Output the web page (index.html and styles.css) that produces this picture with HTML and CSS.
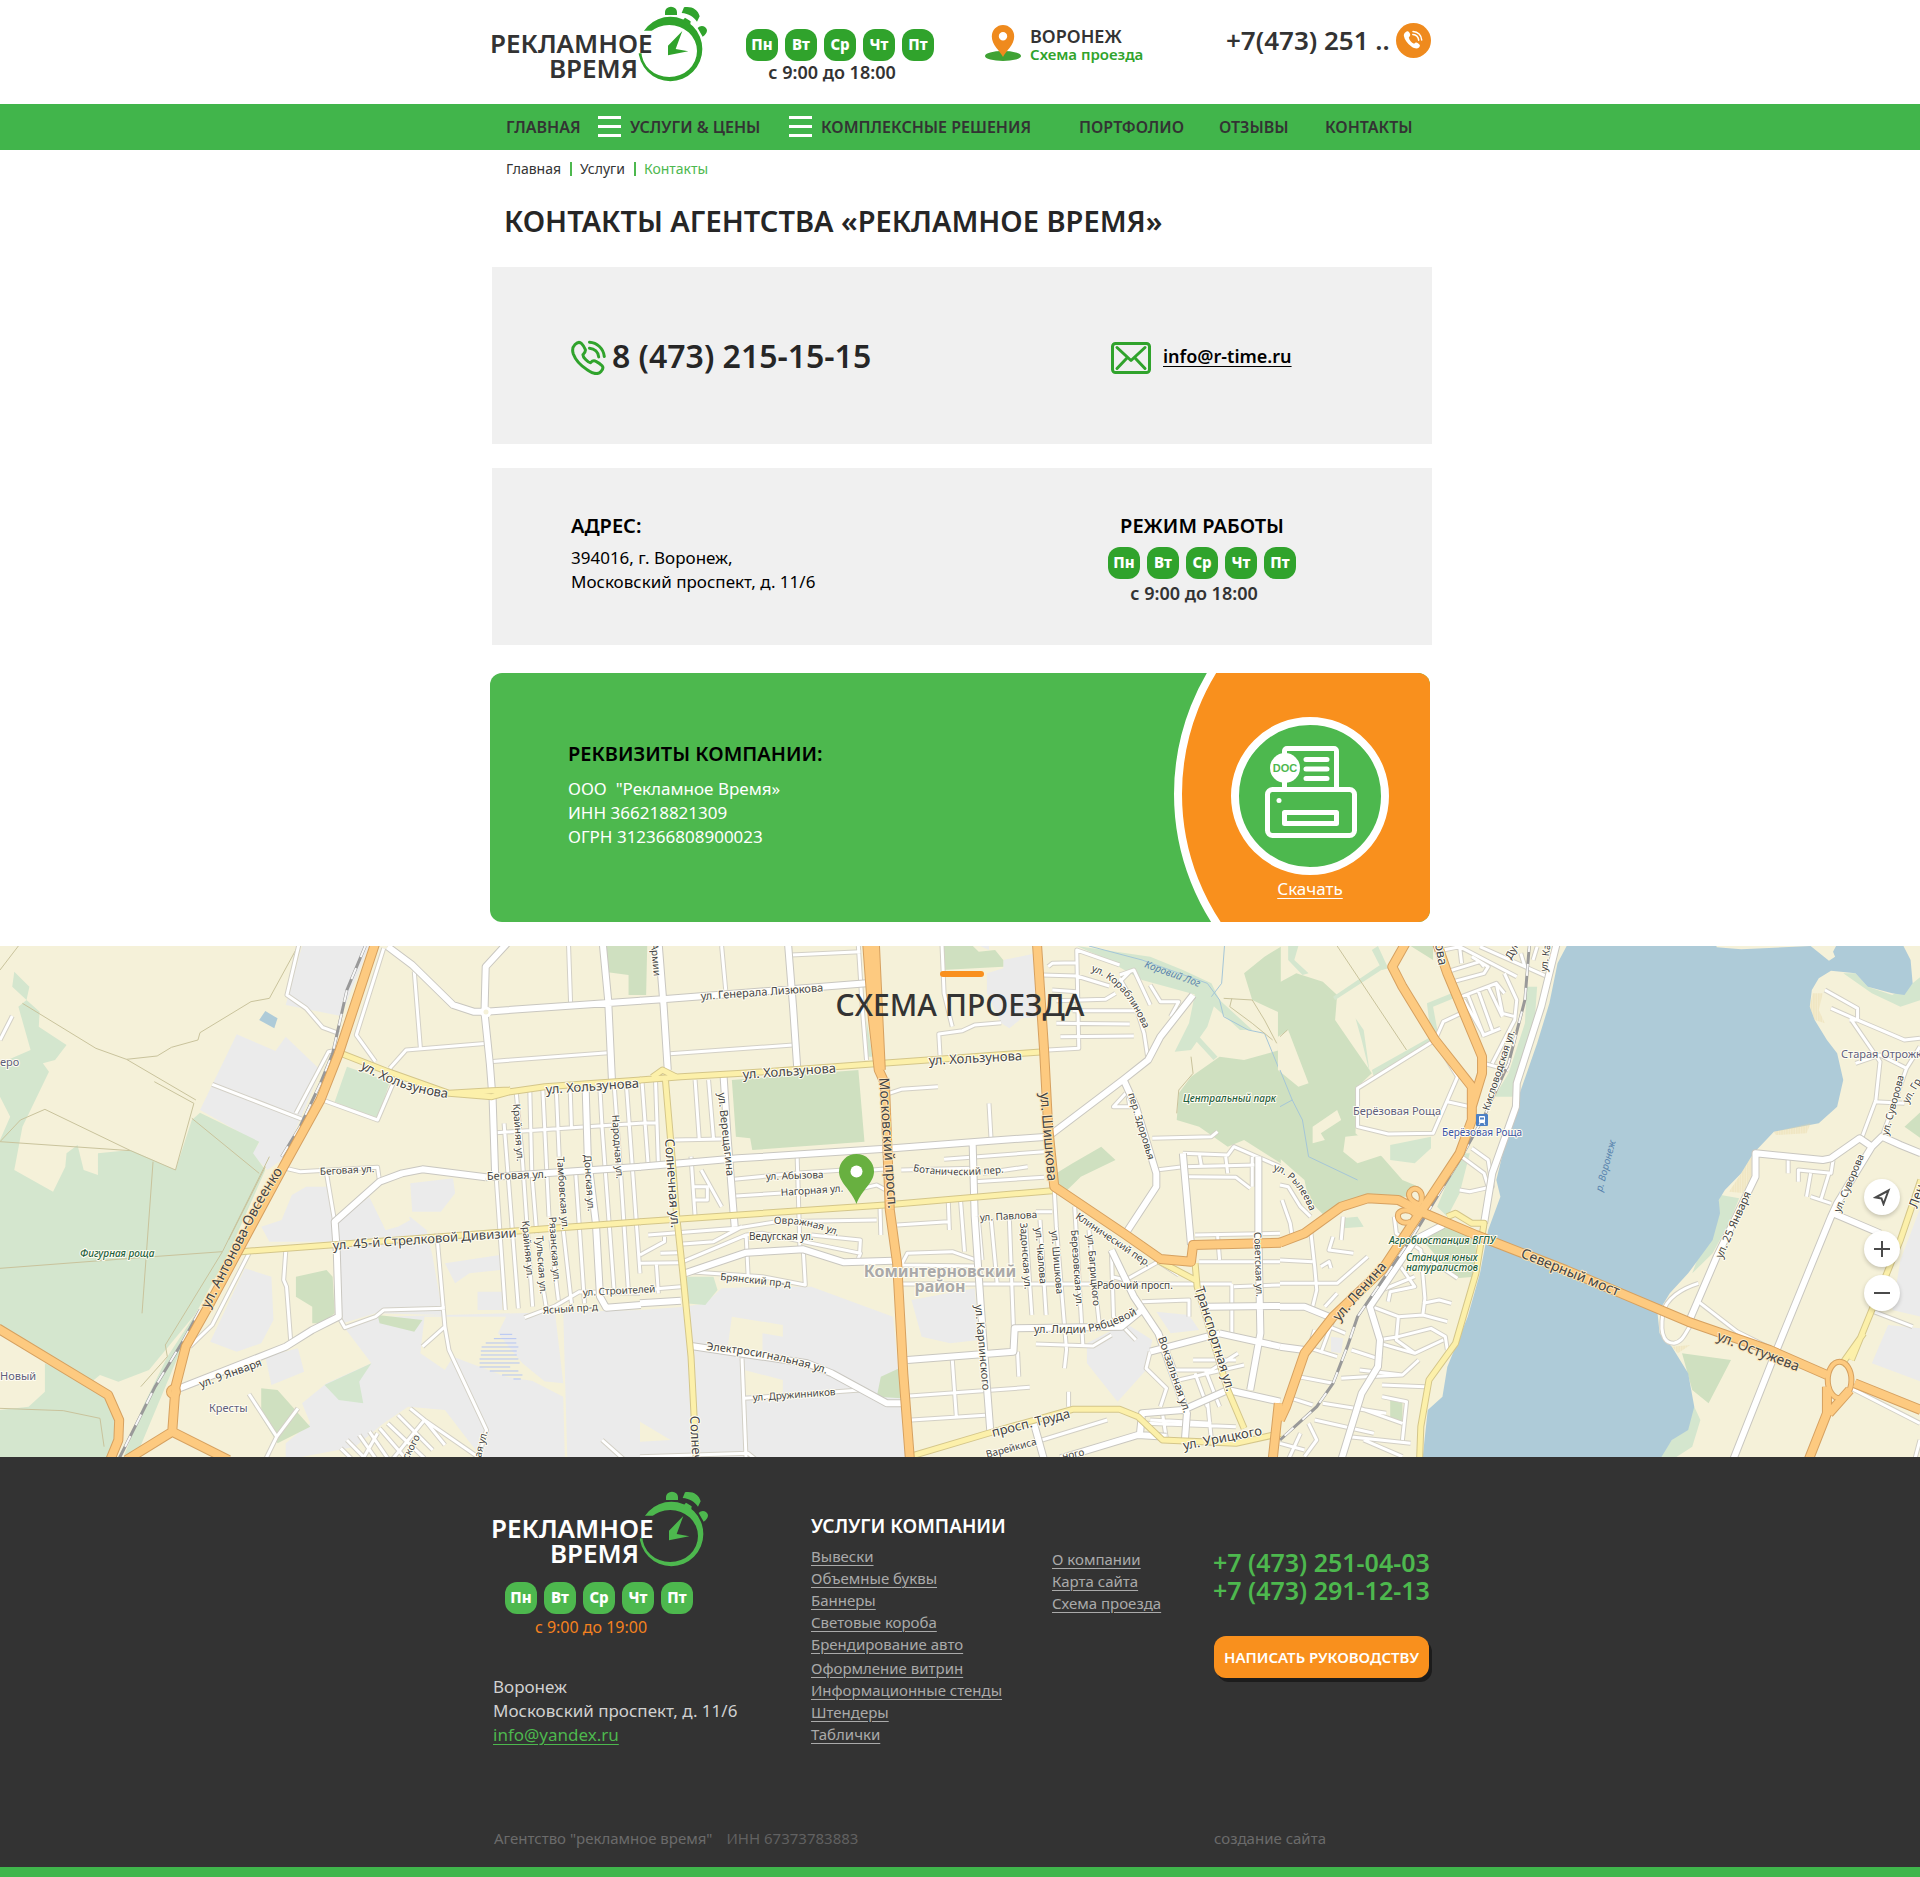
FILE: index.html
```html
<!DOCTYPE html>
<html lang="ru">
<head>
<meta charset="utf-8">
<meta name="viewport" content="width=device-width, initial-scale=1">
<title>Контакты агентства «Рекламное Время»</title>
<link rel="stylesheet" href="styles.css">
</head>
<body>
<svg class="sprite" aria-hidden="true">
  <defs>
    <clipPath id="clock-cut"><path d="M470 40H690V250H470V160H560V92H470z"/></clipPath>
    <g id="clock">
      <path fill-rule="evenodd" clip-path="url(#clock-cut)" d="M475 147a96 96.500 0 1 0 192 0a96 96.500 0 1 0-192 0zM484 153a83.500 78 0 1 0 167 0a83.500 78 0 1 0-167 0z"/>
      <path d="M555 45V36a18 16 0 0 1 36 0v9zM605 39l7-17c22-4 42 6 47 27l-8 16c-9-14-25-24-46-26zM607 62l8-9 17 11-2 16zM653 84c8-10 24-8 28 6 0 8-4 14-13 20zM607 93l-20 54 38 7-61 12v-29z"/>
    </g>
  </defs>
</svg>

<header class="header">
  <div class="wrap header__grid">
    <a class="logo" href="#" aria-label="Рекламное время">
      <svg width="218" height="78" viewBox="0 0 218 78">
        <use class="logo__clock" href="#clock" transform="translate(-11 -5) scale(.33333)"/>
        <text class="logo__text" x="-1" y="48">РЕКЛАМНОЕ</text>
        <text class="logo__text" x="147" y="73" text-anchor="end">ВРЕМЯ</text>
      </svg>
    </a>
    <div class="hours hours--header">
      <div class="days"><span>Пн</span><span>Вт</span><span>Ср</span><span>Чт</span><span>Пт</span></div>
      <p class="hours__time">с 9:00 до 18:00</p>
    </div>
    <div class="city">
      <svg width="36" height="36" viewBox="0 0 36 36"><ellipse cx="18" cy="31" rx="18" ry="5" fill="#3fa234"/><path fill="#ef8a1d" fill-rule="evenodd" d="M18 32C15 26 6.800 20 6.800 11.500a11.200 11.500 0 0 1 22.400 0C29.200 20 21 26 18 32zM18 7a4.200 4.200 0 1 0 0 8.400A4.200 4.200 0 0 0 18 7z"/></svg>
      <div class="city__text"><b>ВОРОНЕЖ</b><a href="#map">Схема проезда</a></div>
    </div>
    <div class="call">
      <span>+7(473) 251 ..</span>
      <button class="call__button" type="button" aria-label="Позвонить">
        <svg width="35" height="35" viewBox="0 0 35 35"><circle cx="17.500" cy="17.500" r="17.500" fill="#ef8a1d"/><path fill="#fff" d="M9.500 9.200c1.700-1.600 3-1.200 4.100.9 1 1.900.9 2.800-.8 4.400.6 2.900 2.600 5.200 5.300 6.200 1.500-1.500 2.500-1.500 4.200-.2 2 1.500 2.200 2.400.7 3.900-1.600 1.600-4.200 1.500-7.600-.9-4.500-3.200-6.800-6.800-7.500-10.400-.3-1.600.3-2.800 1.600-3.900z"/><path fill="none" stroke="#fff" stroke-width="1.500" stroke-linecap="round" d="M17 8.500c5 .2 8.500 3.800 8.700 8.500M16.800 11.500c3.400.3 5.500 2.500 5.900 5.700"/></svg>
      </button>
    </div>
  </div>
</header>

<nav class="nav" aria-label="Основное меню">
  <ul class="wrap nav__list">
    <li><a href="#">ГЛАВНАЯ</a></li>
    <li><a href="#"><i class="burger"></i>УСЛУГИ &amp; ЦЕНЫ</a></li>
    <li><a href="#"><i class="burger"></i>КОМПЛЕКСНЫЕ РЕШЕНИЯ</a></li>
    <li><a href="#">ПОРТФОЛИО</a></li>
    <li><a href="#">ОТЗЫВЫ</a></li>
    <li><a href="#">КОНТАКТЫ</a></li>
  </ul>
</nav>

<main>
  <div class="wrap">
    <ol class="crumbs">
      <li><a href="#">Главная</a></li>
      <li><a href="#">Услуги</a></li>
      <li class="crumbs__current" aria-current="page">Контакты</li>
    </ol>
    <h1 class="title">КОНТАКТЫ АГЕНТСТВА «РЕКЛАМНОЕ ВРЕМЯ»</h1>

    <section class="card card--contacts">
      <div class="contact">
        <svg class="outline" width="35" height="35" viewBox="0 0 35 35"><path d="M4 4.500C6 2.500 8.500 1.500 10.500 3.500c2 2 3 4 3.800 6 .7 2.200-.6 3.300-2.300 5-.5 2.500 5 8 7.500 8.200 1.700-1.800 3-2.600 5-1.600 2.600 1.200 4.700 2.700 6.600 4.600 1.700 1.900.7 3.800-1.100 5.800-3 3.300-8.500 2-13.500-1.500C9.500 25.500 4.500 20 2.300 14 1 10 1.500 7 4 4.500zM18.500 2.200C26 2.500 32.500 8.500 33.300 16.500M18.500 8.200c5 .4 8.800 3.800 9.200 8.800"/></svg>
        <span class="contact__phone">8 (473) 215-15-15</span>
      </div>
      <div class="contact contact--mail">
        <svg class="outline" width="40" height="32" viewBox="0 0 40 32"><rect x="1.500" y="1.500" width="37" height="29" rx="3"/><path d="M6 5.500l14 13 14-13M6 26.500l9.500-10M34 26.500l-9.500-10"/></svg>
        <a href="mailto:info@r-time.ru">info@r-time.ru</a>
      </div>
    </section>

    <section class="card card--address">
      <div>
        <h2>АДРЕС:</h2>
        <p>394016, г. Воронеж,<br>Московский проспект, д. 11/6</p>
      </div>
      <div class="hours hours--card">
        <h2>РЕЖИМ РАБОТЫ</h2>
        <div class="days"><span>Пн</span><span>Вт</span><span>Ср</span><span>Чт</span><span>Пт</span></div>
        <p class="hours__time">с 9:00 до 18:00</p>
      </div>
    </section>

    <section class="company">
      <div class="company__text">
        <h2>РЕКВИЗИТЫ КОМПАНИИ:</h2>
        <p>ООО&nbsp; "Рекламное Время»<br>ИНН 366218821309<br>ОГРН 312366808900023</p>
      </div>
      <div class="company__download">
        <svg class="company__arc" width="256" height="249" viewBox="0 0 256 249" aria-hidden="true"><circle cx="239" cy="121" r="235"/></svg>
        <svg class="company__printer" width="158" height="158" viewBox="0 0 158 158" aria-hidden="true">
          <circle cx="79" cy="79" r="75" fill="#4db84e" stroke="#fff" stroke-width="8"/>
          <g fill="none" stroke="#fff" stroke-width="5" stroke-linecap="round" stroke-linejoin="round">
            <rect x="36.500" y="72.500" width="87" height="46" rx="5"/>
            <path d="M53.500 72V34a2.500 2.500 0 0 1 2.500-2.500h47a2.500 2.500 0 0 1 2.500 2.500v38M75 42.500h21M75 52h21M75 61.500h21"/>
            <path d="M53.500 95.500h52v11h-52z"/>
          </g>
          <circle cx="48" cy="83.500" r="2.500" fill="#fff"/>
          <circle cx="54" cy="51" r="15" fill="#fff"/>
          <text x="54" y="55" text-anchor="middle">DOC</text>
        </svg>
        <a href="#">Скачать</a>
      </div>
    </section>
  </div>

  <section class="map" id="map">
    <svg class="map__canvas" viewBox="0 0 1920 511" preserveAspectRatio="xMidYMid slice" aria-hidden="true">
      <defs>
        <g id="roads-minor">
          <g transform="translate(0 -6) scale(.40816 .33333)">
            <path d="M735 0L703 165 750 205 790 262 830 280M940 25L873 285 920 365M1015 95L1030 325M955 385L995 330 1195 310M1200 365L1490 338M1393 18L1398 190M955 385L965 425 925 540 790 480M830 330L805 335 725 520M520 433L745 540M700 685L735 695 925 682 930 725M800 700L820 845M610 940L520 1155 465 1220M700 935L695 1020 702 1040 712 1200M830 1130L845 1163 920 1130 940 1110 1090 1105M1070 880L1090 1160 1035 1220M1090 1160L1100 1230 1192 1470 1170 1560M610 1362L678 1490 650 1560M678 1490L730 1405M0 300L30 228"/>
            <path d="M1215 578L1568 550M1265 460L1280 660 1305 1100M1298 450L1303 700 1315 880M1330 450L1345 830M1363 450L1370 650M1397 450L1400 560M1470 450L1475 560 1505 1060M1505 440L1520 690 1540 1060M1215 700L1238 1110M1235 550L1270 1105M1380 870L1400 1090M1410 690L1432 1090M1535 440L1568 1000M1330 1040L1338 1100M1350 900L1368 1080M1285 1133L1360 1098 1420 1055 1568 1060M1475 1500L1530 1560"/>
            <path d="M1005 1405L1040 1440 1170 1550M1040 1440L960 1560M975 1425L1060 1530M950 1450L1040 1555M930 1465L990 1550M905 1475L950 1555M880 1485L920 1555M850 1500L890 1550M835 1525L860 1555M925 1480L890 1555M1040 1440L1090 1515"/>
          </g>
          <g transform="translate(640 -6) scale(.40816 .33333)">
            <path d="M200 18L210 150M370 45L540 35M535 18L545 210 555 360M65 342L375 315M740 18L745 160 765 260M735 345L732 282 790 272 820 255 885 248M610 460L640 448 730 440M855 490L860 595M1000 330L1075 325 1070 30 1175 75M985 105L1070 108 1150 138M1010 150L1070 155M1020 182L1140 178 1165 160M1060 212L1215 212M1020 250L1200 252M1030 290L1210 288M1000 80L1010 70 1070 68M1175 105L1210 90 1250 195M1200 95L1180 120M1250 135L1275 185 1320 185 1300 230M1245 360L1235 280 1215 200 1175 115"/>
            <path d="M0 550L40 548M5 425L20 675M38 420L45 670M135 420L145 595M168 420L180 595M85 600L200 597M125 650L135 830M150 690L200 800M130 740L165 740 165 780 130 780M230 718L380 700 500 690M235 768L440 752M385 650L392 930M545 745L580 735 610 755M570 690L620 685M640 690L815 685M745 658L990 635M820 725L990 712M840 700L950 680M755 775L758 870M785 775L795 935M588 800L590 885M630 855L755 845"/>
            <path d="M20 885L235 865 335 845 580 840M105 912L180 905 250 860M105 965L260 885 300 880 540 940 535 955M260 885L265 1010M400 930L405 1035 300 1010 120 995M420 885L540 900 538 940M0 945L60 905 60 890M0 970L100 968M50 940L95 938M5 1050L100 1040M40 970L45 1060M250 1255L260 1560M255 1375L540 1350M0 1550L265 1540 285 1560"/>
            <path d="M640 975L655 940 765 935 835 965M640 975L825 978M640 1032L1450 1032M860 835L875 1030M830 850L838 960M905 840L915 1165M945 860L960 1125M980 840L995 1125M1015 750L1020 860 1045 1230 1040 1285M1065 800L1085 1215M1100 870L1125 1150M970 815L1010 815M970 1212L1110 1218 1155 1185M925 1235L928 1310M660 1368L955 1342M765 1258L775 1430M665 1440L855 1425M1050 1355L1050 1400M1155 930L1160 1130 1215 1200M1155 1010L1190 1020 1270 965M1270 965L1320 1005"/>
            <path d="M1190 420L1200 500 1160 500 1190 460M1255 595L1400 590 1415 575M1265 690L1330 680 1510 675M1330 640L1440 645 1455 620 1568 680M1340 710L1460 712 1495 745M1435 650L1440 700M1370 640L1375 675M1500 650L1500 740M1415 885L1420 960M1360 885L1568 880M1370 965L1568 965M1450 1032L1450 1180M1230 1085L1345 1080 1345 1130M1455 1040L1568 1035M1225 1100L1270 1180M1250 1235L1240 1285 1290 1345 1275 1400M1290 1225L1310 1290 1400 1290 1465 1240M1355 1260L1460 1260M1320 1320L1480 1275M1385 1290L1420 1400M1360 1300L1390 1400M1250 1440L1400 1450M1280 1420L1290 1500M1390 1380L1400 1500M985 1500L1145 1440M1240 1450L1460 1460"/>
          </g>
          <g transform="translate(1280 -6) scale(.40816 .33333)">
            <path d="M410 95L490 65 500 80M440 20L445 70M425 125L500 100 510 80 470 50M400 30L440 20 580 110M445 170L530 130 550 160M460 165L500 290M485 150L520 270M510 140L545 230M530 130L545 220 575 230M550 100L580 180 575 240 520 370M450 180L500 285 540 265M490 20L600 80M590 40L600 80 655 110M620 60L630 20M500 370L560 390M440 222L400 245 380 300 190 445 190 560 265 582 375 580 435 410 380 300M410 485L465 500M470 625L510 660 520 740 465 755 440 750M445 650L500 700 510 740"/>
            <path d="M1335 150L1415 205 1415 240 1350 205M1395 240L1415 240 1530 300 1568 295M1400 240L1470 365 1460 480 1425 595M1410 370L1470 345 1535 385 1568 320M1455 485L1530 490M1535 385L1475 590M1245 655L1245 700M1270 725L1270 690 1350 700 1355 660M1300 700L1290 770M1345 700L1325 780M1300 770L1350 790M1455 1115L1550 1160M1400 1345L1568 1450M1568 1500L1555 1560"/>
            <path d="M0 735L20 740 50 800 75 830M5 780L25 850 30 890M75 870L85 980 90 1050 80 1100M130 890L120 930 180 940M155 830L150 900M0 960L80 965M100 980L120 965 125 985M0 1030L140 1030 215 950M280 830L285 880 345 930 355 1075 350 1125M290 970L330 1040 270 1055 265 1085M250 1050L330 1010M345 940L435 1015M110 1100L140 1060M350 1125L410 1145M350 1090L390 1080 420 1090M225 1100L290 1130 350 1125M290 1130L285 1200 330 1240M240 1200L290 1190 370 1165 405 1190 410 1230M245 1210L330 1240 400 1200M150 1315L210 1310 300 1305 340 1260M175 1230L250 1260M195 1290L300 1305M120 1160L160 1180M75 1225L140 1250M85 1170L70 1230M130 1140L100 1240M45 1310L130 1330M15 1370L80 1395M105 1390L260 1420M250 1335L355 1340M250 1370L310 1385 300 1500M85 1440L230 1480M205 1500L300 1550M185 1400L300 1450M70 1450L90 1500 60 1550M0 1510L60 1530M50 1480L20 1560M170 1490L320 1510"/>
          </g>
        </g>
        <g id="roads-main">
          <g transform="translate(0 -6) scale(.40816 .33333)">
            <path d="M950 20L1010 75 1110 195 1160 215H1190L1570 182M1250 0L1190 80 1187 217 1200 370 1207 480 1213 700M1190 712L1035 688 985 700 930 725 820 845 825 930 830 1130 765 1170 700 1220 440 1345M1190 712L1570 680M1476 0L1490 180 1500 440M1435 450L1440 650 1460 850 1470 1070 1485 1103 1570 1095"/>
          </g>
          <g transform="translate(640 -6) scale(.40816 .33333)">
            <path d="M0 182L55 178 555 130M45 0L58 200 68 390M362 0L375 200 385 380M0 680L240 655 620 625 860 602 1000 590 1185 418 1245 360 1275 290 1355 165M1185 420L1215 500 1265 700 1265 740 1190 880M205 412L215 600 232 860M110 1000L260 938 400 928 500 967 620 962M815 610L820 830 835 1100 850 1340 858 1470M125 1218L410 1270 470 1300 605 1390 645 1390M0 1090L100 1082M655 1260L915 1235 918 1165 1180 1160 1230 1110M1330 640L1350 915M1155 930L1210 1070 1270 1180 1340 1420 1335 1500M1515 650L1515 880 1520 1180 1495 1350M1420 1180L1568 1220M1225 1480L1230 1420 1330 1410 1440 1350 1568 1385M1030 1555L1220 1485 1290 1490M965 1450L990 1560M1390 1100L1568 1098M1250 1235L1420 1180"/>
          </g>
          <g transform="translate(1280 -6) scale(.40816 .33333)">
            <path d="M680 0L640 200 580 430 578 500 520 700 500 850M1110 1560L1215 1235 1350 830 1365 790 1450 620 1475 590 1520 615 1570 640M1450 620L1420 595 1350 655 1330 660 1165 640 1165 710 1070 950 1000 1150M1355 820L1470 880M150 1560L200 1360 240 1280 245 1200 220 1100 330 900 400 855M0 1100L60 1100 120 1130M0 1220L60 1230"/>
          </g>
        </g>
        <g id="bridge-ramp">
          <g transform="translate(1280 -6) scale(.40816 .33333)"><path d="M1025 1030C985 1045 945 1075 938 1120C928 1200 950 1210 965 1210C990 1205 995 1170 1010 1150M1025 1085L1120 1175 1210 1230"/></g>
        </g>
        <g id="roads-yellow">
          <g transform="translate(0 -6) scale(.40816 .33333)"><path d="M835 340L950 395 1100 460 1205 452 1250 450M1100 460L1205 470 1250 455 1335 440 1570 420M590 935L1570 845"/></g>
          <g transform="translate(640 -6) scale(.40816 .33333)"><path d="M0 420L100 410 250 400 560 373 990 335M30 412L55 390 90 412M62 415L75 600 90 830 105 1000 125 1250 138 1560M0 845L600 795 1010 752M1270 962L1360 1020M1360 970L1365 1040 1440 1350 1480 1465M660 1550L880 1470 1060 1408 1175 1408 1220 1430 1280 1500 1460 1510 1570 1480"/></g>
          <g transform="translate(1280 -6) scale(.40816 .33333)"><path d="M410 830L430 820 470 850 500 850 480 1000 430 1210 365 1320 345 1460 342 1560M1570 720L1520 900 1450 1110 1400 1260M1430 1180L1375 1275"/></g>
        </g>
        <g id="roads-orange">
          <g transform="translate(0 -6) scale(.40816 .33333)"><path d="M922 0L830 340 785 480 690 690 510 1100 455 1220 430 1340 422 1475 310 1560M422 1475L560 1560M-5 1165L265 1365 292 1440 290 1500 270 1560"/></g>
          <g transform="translate(640 -6) scale(.40816 .33333)"><path d="M556 0L570 230 585 390 600 430 612 810 630 970 645 1300 662 1570M575 0L590 390M972 0L990 330 1000 560 1015 740 1185 880 1275 957 1350 965 1355 915 1570 908M1565 1390L1550 1560"/></g>
          <g transform="translate(1280 -6) scale(.40816 .33333)"><path d="M0 908L60 880 150 800 215 775 290 780 345 815 480 885 700 990 1000 1145 1200 1230 1340 1305M1408 1330L1570 1410M1340 1340V1420L1295 1560M1396 1350L1345 1420M312 0L275 80 300 140 380 300 470 440 470 540 440 640 370 770 320 860 250 990 130 1130 60 1240 15 1400 0 1440M382 0L410 100 495 350 495 400 470 500"/></g>
        </g>
        <g id="road-loops">
          <g transform="translate(1280 -6) scale(.40816 .33333)"><path d="M1342 1320A29 55 0 0 1 1400 1320A29 55 0 0 1 1342 1320M345 790C355 750 330 735 318 755C310 775 330 790 345 795M320 845C300 855 285 840 290 820C300 805 325 810 330 825"/></g>
          <g transform="translate(0 -6) scale(.40816 .33333)"><path d="M414 1355A11 13 0 0 1 436 1355A11 13 0 0 1 414 1355"/></g>
        </g>
        <g id="railway">
          <g transform="translate(0 -6) scale(.40816 .33333)"><path d="M895 18L850 150 815 340 785 430 735 560 690 650M490 1110L450 1200 380 1340 290 1560"/></g>
          <g transform="translate(1280 -6) scale(.40816 .33333)"><path d="M612 0L600 180 560 370 500 530 440 660 390 760 330 880 190 1130 165 1220 130 1330 90 1400 0 1500"/></g>
        </g>
        <pattern id="sand" width="6" height="6" patternUnits="userSpaceOnUse"><path d="M0 3L3 0 6 3 3 6z" fill="none" stroke="#ecd5a2"/></pattern>
        <path id="way-hol" d="M360 122Q397 146 454 153"/>
        <path id="way-ant" d="M209 363Q232 318 252 278T292 214"/>
        <path id="way-kor" d="M1091 25Q1125 36 1145 86"/>
        <path id="way-ovr" d="M774 278Q808 276 842 292"/>
        <path id="way-lid" d="M1034 387H1082Q1112 384 1148 362"/>
        <path id="way-ele" d="M706 404Q775 410 836 431"/>
        <path id="way-ryl" d="M1273 224Q1296 230 1311 268"/>
        <path id="way-bot" d="M913 225Q950 233 1008 226"/>
      </defs>

      <rect class="land" width="1920" height="511"/>
      <g transform="translate(0 -6) scale(.40816 .33333)">
        <path class="industrial" d="M740 18H905L835 228 700 195zM580 283L675 333 700 290 785 390 735 540 690 660 655 690 615 640 635 610 490 510zM715 765L750 740 805 740 820 850 905 770 945 870 1005 830 1045 870 1060 950 1085 1125 920 1120 840 1150 825 905H660L640 860 690 840zM600 985L665 1010 670 1140 640 1210 580 1235 515 1205zM650 1250L730 1225 745 1295 665 1335zM845 1165L930 1130 1570 1110V1570H1190L1090 1410 1000 1400 940 1450 870 1520 700 1560V1510L760 1450 740 1390 800 1330 910 1270zM1005 730L1110 715 1115 760 1080 815H1010zM1090 970L1225 945V990L1150 1000 1115 1030zM1170 1055h60v55h-60z"/>
        <path class="land" d="M905 770L945 870 975 860 1005 840 980 770 930 735zM1040 1130L1240 1130 1220 1180 1280 1270 1340 1330 1240 1310 1110 1250 1090 1290 1030 1240zM1360 1120L1380 1120 1390 1560H1384L1380 1370 1300 1320 1380 1330z"/>
        <path class="park" d="M35 95L72 140 65 180 97 215 95 260 163 315 135 360 105 370 120 395 55 560 35 690 130 755 160 680 163 640 190 615 205 690 240 705 240 640 320 630 430 690 470 540 490 518 635 605 620 640 650 690 560 940 480 1120 365 1290 290 1325 245 1305 220 1330 0 1155V600L25 530 0 470V370L75 330 45 200 65 180 30 140zM0 1410L70 1400 110 1355V1270L220 1330 280 1385 290 1480 270 1560H0zM850 380L955 425 925 540 820 485zM480 1120L410 1250 350 1400 300 1560H330L460 1180zM795 1335L910 1270 880 1325 890 1390 830 1380z"/>
        <path class="wood" d="M725 1010L800 990 815 1010 820 1120 790 1150H765V1100L725 1070zM925 1125L1035 1140 1015 1175 930 1150zM640 1345L680 1350 760 1460 680 1510 640 1430zM1480 0H1570V165H1540V105L1480 95z"/>
        <path class="water" d="M650 213L680 235 672 265 635 240z"/>
        <path class="marsh" d="M1225 1183h30M1210 1196h55M1190 1209h75M1180 1221h90M1178 1233h88M1178 1245h88M1175 1257h95M1175 1269h98M1175 1281h75M1200 1293h70M1230 1305h50M1258 1317h18"/>
        <path class="trail" d="M0 90L45 18M55 190L235 325 310 358 480 480M310 358L385 348 420 322 485 300 490 278 615 185 660 175 730 18M0 605L320 632 430 690 475 490 378 425M0 605L50 540 110 508 320 632M0 985L375 950 545 935M375 665L348 1120M470 535L635 700M660 650L545 935 405 1215 410 1250 345 1340M650 680L560 900M0 1405L155 1412 245 1435 255 1520"/>
      </g>
      <g transform="translate(640 -6) scale(.40816 .33333)">
        <path class="industrial" d="M0 1110L110 1100 160 1090 200 1045 300 1040 420 1040 620 1130 640 1380 655 1560H0zM665 1080L820 1045 830 1200 760 1210 690 1190zM890 60L970 40 985 230 935 235 905 265 885 250 850 160V100L890 85zM1095 1210L1190 1150 1255 1200 1240 1290 1170 1385 1095 1270zM1265 1115L1345 1125 1370 1170 1300 1180zM800 0H855V30z"/>
        <path class="land" d="M225 1130L350 1155V1190L300 1180V1235L215 1220zM255 1290L350 1320V1370L255 1365zM0 1445L75 1500 0 1505z"/>
        <path class="wood" d="M225 420L535 390 550 605 275 630 270 595 235 590zM745 0H800L830 35 870 30 890 60V80L740 90zM1568 330L1480 360 1420 350 1350 410 1320 460 1315 540 1370 560 1440 620 1480 600 1570 670zM1480 100L1530 50 1570 20V220L1500 180zM1020 700L1060 670 1130 620 1165 660 1080 710 1030 770zM580 1370L590 1310 635 1285 640 1375zM0 0H18L15 165H0z"/>
        <path class="park" d="M1070 18L1250 50 1330 90 1400 130 1420 180 1500 270H1470L1380 170 1230 120 1130 50zM1360 160L1415 165 1390 260 1350 330 1310 335 1345 250zM1370 290L1415 350 1405 360 1360 300zM110 1010L180 1010 190 1050 160 1095 110 1090zM555 240L570 350H558z"/>
        <path class="stream" d="M1100 18L1230 60 1390 130 1420 180 1430 230 1490 270 1530 280 1570 400M1432 18L1425 130 1400 170"/>
        <path class="trail" d="M1430 175L1500 180 1530 240 1560 310M1450 175L1445 200 1500 250 1550 300M1350 350L1355 400 1320 450 1315 520"/>
      </g>
      <g transform="translate(1280 -6) scale(.40816 .33333)">
        <path class="wood" d="M-5 130L40 100 105 125 140 165 135 240 180 320 225 400 190 440 185 580 250 650 300 720 340 740 310 770 200 770 115 835 70 780 60 720-5 650zM320 18H375V60zM345 895L400 860 480 880V1010L430 1015zM985 1240L1105 1260 1050 1390 1010 1350zM1570 515L1530 560 1570 595zM270 1380L300 1390V1450L270 1440z"/>
        <path class="land" d="M-5 290L20 270 70 430 45 440-5 390zM160 590L235 580 265 640 190 670 155 635zM80 560L140 510 150 540 100 580 110 600 80 610z"/>
        <path class="park" d="M130 170L245 75 255 85 135 180zM225 390L370 290 360 190 440 150 445 165 375 200 390 300 230 410zM185 235L205 270 220 400 200 300zM605 140H630L620 310 570 470H525L560 400 600 250zM270 615L370 590V625L330 670 270 660zM150 835L190 830 205 860 155 865zM1380 100L1410 100 1440 140 1500 165 1550 130 1570 110V180L1520 200 1450 160zM1080 765L1125 775 1100 850 1060 940 1010 1000zM1015 1400L1030 1440 1010 1520 960 1560H925L960 1500zM20 18H45L35 60 70 100 55 105 20 60zM240 18L265 85 250 90 225 30zM440 640L465 640 440 760 410 830 385 800z"/>
        <path class="industrial" d="M1570 800L1520 960 1500 1110 1570 1130zM1490 1155L1570 1165V1325L1450 1270zM125 1190L155 1195 150 1240 125 1235z"/>
        <path class="water" d="M710 0H1065L1070 22 1130 28 1300 18 1345 62 1360 50 1355 35 1370 0H1520L1545 60 1550 130 1530 165 1500 160 1440 140 1410 100 1350 92 1320 115 1303 150 1298 200 1310 240 1340 300 1365 340 1380 420 1365 500 1320 550 1210 575 1160 640 1130 700 1090 750 1075 780 1078 820 1060 900 1000 1000 955 1060 925 1120 930 1180 960 1220 1000 1300 1015 1400 1000 1470 960 1500 925 1570H348L362 1410 398 1370 410 1280 460 1130 490 1000 510 870 540 770 530 720 560 570 590 450 630 310 660 190 680 70z"/>
        <path class="sand" d="M1305 160H1330L1320 210 1335 250 1310 240 1298 200zM1210 575L1300 550 1290 580 1215 585zM1160 640L1165 710 1140 760 1100 755 1130 700zM960 1220L1005 1215 975 1240z"/>
        <path class="stream" d="M0 390L30 480 55 540 70 650 190 720M30 480L0 500"/>
        <path class="trail" d="M140 18L310 330M0 290L18 270"/>
      </g>

      <use href="#roads-minor" class="casing casing--minor"/>
      <use href="#bridge-ramp" class="casing casing--minor"/>
      <use href="#roads-minor" class="road road--minor"/>
      <use href="#roads-main" class="casing casing--main"/>
      <use href="#roads-main" class="road road--main"/>
      <use href="#bridge-ramp" class="road road--minor"/>
      <circle class="ring" cx="486" cy="66" r="4"/>
      <use href="#railway" class="rail"/>
      <use href="#railway" class="rail rail--gaps"/>
      <use href="#roads-yellow" class="casing casing--yellow"/>
      <use href="#roads-yellow" class="road road--yellow"/>
      <use href="#road-loops" class="casing casing--loop"/>
      <use href="#roads-orange" class="casing casing--orange"/>
      <use href="#roads-orange" class="road road--orange"/>
      <use href="#road-loops" class="road road--loop"/>

      <g class="label label--small">
        <text transform="translate(320 229) rotate(-3)">Беговая ул.</text>
        <text transform="translate(513 158) rotate(86)">Крайняя ул.</text>
        <text transform="translate(612 169) rotate(86)">Народная ул.</text>
        <text transform="translate(557 211) rotate(86)">Тамбовская ул.</text>
        <text transform="translate(584 209) rotate(86)">Донская ул.</text>
        <text transform="translate(549 271) rotate(86)">Рязанская ул.</text>
        <text transform="translate(522 275) rotate(85)">Крайняя ул.</text>
        <text transform="translate(536 290) rotate(86)">Тульская ул.</text>
        <text transform="translate(583 350) rotate(-3)">ул. Строителей</text>
        <text transform="translate(543 368) rotate(-4)">Ясный пр-д</text>
        <text transform="translate(408 514) rotate(-62)">ского</text>
        <text transform="translate(481 512) rotate(-76)">ая ул.</text>
        <text transform="translate(651 -2) rotate(85)">Армии</text>
        <text transform="translate(1128 148) rotate(73)">пер. Здоровья</text>
        <text><textPath href="#way-kor">ул. Кораблинова</textPath></text>
        <text><textPath href="#way-bot">Ботанический пер.</textPath></text>
        <text transform="translate(766 234) rotate(-2)">ул. Абызова</text>
        <text transform="translate(781 250) rotate(-4)">Нагорная ул.</text>
        <text><textPath href="#way-ovr">Овражная ул.</textPath></text>
        <text x="749" y="294">Ведугская ул.</text>
        <text transform="translate(720 334) rotate(6)">Брянский пр-д</text>
        <text transform="translate(980 275) rotate(-3)">ул. Павлова</text>
        <text transform="translate(1020 277) rotate(86)">Задонская ул.</text>
        <text transform="translate(1035 282) rotate(85)">ул. Чкалова</text>
        <text transform="translate(1051 285) rotate(85)">ул. Шишкова</text>
        <text transform="translate(1071 284) rotate(86)">Березовская ул.</text>
        <text transform="translate(1087 289) rotate(85)">ул. Багрицкого</text>
        <text transform="translate(1075 272) rotate(34)">Клинический пер.</text>
        <text x="1097" y="343">Рабочий просп.</text>
        <text transform="translate(753 455) rotate(-4)">ул. Дружинников</text>
        <text transform="translate(1254 286) rotate(88)">Советская ул.</text>
        <text transform="translate(987 512) rotate(-15)">Варейкиса</text>
        <text transform="translate(1063 514) rotate(-12)">ного</text>
        <text><textPath href="#way-ryl">ул. Рылеева</textPath></text>
        <text transform="translate(1511 14) rotate(-62)">Дун</text>
        <text transform="translate(1547 26) rotate(-83)">ул. Ка</text>
        <text transform="translate(1489 165) rotate(-72)">Кисловодская ул.</text>
        <text transform="translate(1840 267) rotate(-67)">ул. Суворова</text>
        <text transform="translate(1888 190) rotate(-75)">ул. Суворова</text>
        <text transform="translate(1908 158) rotate(-60)">ул. Гр</text>
      </g>
      <g class="label label--medium">
        <text transform="translate(487 234) rotate(-2)">Беговая ул.</text>
        <text transform="translate(201 442) rotate(-20)">ул. 9 Января</text>
        <text transform="translate(701 54) rotate(-4)">ул. Генерала Лизюкова</text>
        <text transform="translate(718 147) rotate(84)">ул. Верещагина</text>
        <text transform="translate(1158 392) rotate(71)">Вокзальная ул.</text>
        <text><textPath href="#way-lid">ул. Лидии Рябцевой</textPath></text>
        <text><textPath href="#way-ele">Электросигнальная ул.</textPath></text>
        <text transform="translate(975 359) rotate(85)">ул. Карпинского</text>
        <text transform="translate(1722 313) rotate(-66)">ул. 25 Января</text>
      </g>
      <g class="label label--large">
        <text><textPath href="#way-hol">ул. Хользунова</textPath></text>
        <text transform="translate(546 148) rotate(-4)">ул. Хользунова</text>
        <text transform="translate(333 304) rotate(-4)">ул. 45-й Стрелковой Дивизии</text>
        <text class="label--avenue"><textPath href="#way-ant">ул. Антонова-Овсеенко</textPath></text>
        <text transform="translate(743 133) rotate(-4)">ул. Хользунова</text>
        <text transform="translate(929 119) rotate(-3)">ул. Хользунова</text>
        <text transform="translate(665 193) rotate(86)">Солнечная ул.</text>
        <text transform="translate(690 470) rotate(87)">Солнечная ул.</text>
        <text class="label--avenue" transform="translate(879 132) rotate(86)">Московский просп.</text>
        <text class="label--avenue" transform="translate(1040 147) rotate(85)">ул. Шишкова</text>
        <text transform="translate(1195 342) rotate(73)">Транспортная ул.</text>
        <text transform="translate(993 491) rotate(-14)">просп. Труда</text>
        <text transform="translate(1184 504) rotate(-11)">ул. Урицкого</text>
        <text transform="translate(1435 -2) rotate(80)">ова</text>
        <text transform="translate(1917 263) rotate(-70)">Лен</text>
        <text class="label--avenue" transform="translate(1520 311) rotate(22)">Северный мост</text>
        <text class="label--avenue" transform="translate(1716 394) rotate(21)">ул. Остужева</text>
        <text class="label--avenue" transform="translate(1339 376) rotate(-49)">ул. Ленина</text>
      </g>
      <g class="label label--place">
        <text x="0" y="120">еро</text>
        <text x="0" y="434">Новый</text>
        <text x="209" y="466">Кресты</text>
        <text x="1353" y="169">Берёзовая Роща</text>
        <text x="1841" y="112">Старая Отрожка</text>
      </g>
      <g class="label label--park">
        <text x="80" y="311">Фигурная роща</text>
        <text x="1183" y="156">Центральный парк</text>
        <text x="1389" y="298">Агробиостанция ВГПУ</text>
        <text x="1406" y="315">Станция юных</text>
        <text x="1406" y="325">натуралистов</text>
      </g>
      <g class="label label--water">
        <text transform="translate(1144 21) rotate(20)">Коровий Лог</text>
        <text transform="translate(1602 246) rotate(-75)">р. Воронеж</text>
      </g>
      <g class="label label--district">
        <text x="940" y="331">Коминтерновский</text>
        <text x="940" y="346">район</text>
      </g>
      <text class="label label--station" x="1442" y="190">Берёзовая Роща</text>
      <g transform="translate(1476 168)"><rect width="12" height="12" rx="1" fill="#4d80c4"/><rect x="3" y="2" width="6" height="7" rx="1" fill="#fff"/><path d="M4 3.500h4v2H4z" fill="#4d80c4"/><path d="M4 9l-1 2M8 9l1 2" stroke="#fff"/></g>

      <path fill="#68b040" d="M856.500 258C851 243 839 237 839 225.500a17.500 17.500 0 0 1 35 0C874 237 862 243 856.500 258z"/>
      <circle cx="856.500" cy="225.500" r="6" fill="#fff"/>
    </svg>
    <h2 class="map__title">СХЕМА ПРОЕЗДА</h2>
    <div class="map__controls">
      <button type="button" aria-label="Моё местоположение"><svg width="18" height="18" viewBox="0 0 18 18"><path d="M2.500 9.500L15.500 2.500 10.500 16 8.500 10.500z"/></svg></button>
      <button type="button" aria-label="Приблизить"><svg width="18" height="18" viewBox="0 0 18 18"><path d="M1 9h16M9 1v16"/></svg></button>
      <button type="button" aria-label="Отдалить"><svg width="18" height="18" viewBox="0 0 18 18"><path d="M1 9h16"/></svg></button>
    </div>
  </section>
</main>

<footer class="footer">
  <div class="wrap footer__grid">
    <div>
      <a class="logo" href="#" aria-label="Рекламное время">
        <svg width="218" height="78" viewBox="0 0 218 78">
          <use class="logo__clock" href="#clock" transform="translate(-10 -5) scale(.33333)"/>
          <text class="logo__text" x="0" y="48">РЕКЛАМНОЕ</text>
          <text class="logo__text" x="148" y="73" text-anchor="end">ВРЕМЯ</text>
        </svg>
      </a>
      <div class="hours hours--footer">
        <div class="days"><span>Пн</span><span>Вт</span><span>Ср</span><span>Чт</span><span>Пт</span></div>
        <p class="hours__time">с 9:00 до 19:00</p>
      </div>
      <address class="footer__address">Воронеж<br>Московский проспект, д. 11/6<br><a href="mailto:info@yandex.ru">info@yandex.ru</a></address>
    </div>
    <div class="footer__services">
      <h2>УСЛУГИ КОМПАНИИ</h2>
      <ul class="links">
        <li><a href="#">Вывески</a></li>
        <li><a href="#">Объемные буквы</a></li>
        <li><a href="#">Баннеры</a></li>
        <li><a href="#">Световые короба</a></li>
        <li><a href="#">Брендирование авто</a></li>
      </ul>
      <ul class="links links--more">
        <li><a href="#">Оформление витрин</a></li>
        <li><a href="#">Информационные стенды</a></li>
        <li><a href="#">Штендеры</a></li>
        <li><a href="#">Таблички</a></li>
      </ul>
    </div>
    <ul class="links footer__pages">
      <li><a href="#">О компании</a></li>
      <li><a href="#">Карта сайта</a></li>
      <li><a href="#">Схема проезда</a></li>
    </ul>
    <div class="footer__phones">
      <p>+7 (473) 251-04-03<br>+7 (473) 291-12-13</p>
      <button class="write" type="button">НАПИСАТЬ РУКОВОДСТВУ</button>
    </div>
  </div>
  <div class="wrap footer__bottom">
    <p><span>Агентство "рекламное время"</span><span>ИНН 67373783883</span></p>
    <a href="#">создание сайта</a>
  </div>
</footer>
</body>
</html>
```
FILE: styles.css
```css
:root {
  --green: #4db84e;
  --green-dark: #30a32c;
  --orange: #f9901d;
  --ink: #333;
}

* { box-sizing: border-box; }

body {
  margin: 0;
  background: #fff;
  color: var(--ink);
  font: 17px/24px "Noto Sans", "Open Sans", sans-serif;
}

h1, h2, p, ul, ol { margin: 0; padding: 0; }
ul, ol { list-style: none; }
h1, h2 { font-weight: 600; }
svg { display: block; }
button { border: 0; padding: 0; background: none; font: inherit; cursor: pointer; }

.sprite { position: absolute; width: 0; height: 0; }
.wrap { width: 100%; max-width: 940px; margin: 0 auto; }

/* Header */
.header { min-height: 104px; }
.header__grid { display: grid; grid-template-columns: 256px 239px 241px 1fr; align-items: start; }

.logo { display: block; padding-left: 1px; text-decoration: none; }
.logo svg { overflow: visible; }
.logo__text { font-size: 26px; font-weight: 600; fill: var(--ink); }
.logo__clock { fill: var(--green-dark); }
.header .logo { padding-top: 5px; }

.hours { display: flex; flex-direction: column; align-items: center; width: 188px; color: var(--ink); }
.hours--header { padding-top: 29px; }
.days { display: flex; gap: 7px; }
.days span {
  width: 32px;
  height: 32px;
  border-radius: 12px;
  background: var(--green-dark);
  color: #fff;
  font-size: 15px;
  font-weight: 800;
  line-height: 31px;
  text-align: center;
}
.hours__time { margin-top: 1px; padding-right: 16px; font-size: 18px; font-weight: 600; line-height: 20px; }

.city { display: flex; gap: 9px; padding-top: 25px; }
.city__text { display: flex; flex-direction: column; padding-top: 2px; font-size: 15px; font-weight: 600; line-height: 18px; }
.city b { font-size: 18px; font-weight: 600; }
.city a { color: var(--green-dark); text-decoration: none; }

.call { display: flex; justify-content: flex-end; gap: 6px; padding-top: 23px; font-size: 26px; font-weight: 600; line-height: 34px; white-space: nowrap; }

/* Navigation */
.nav { background: #41b54b; }
.nav__list { display: grid; grid-template-columns: 92px 191px 290px 140px 106px 1fr; min-height: 46px; padding-left: 16px; align-items: center; }
.nav a { display: flex; align-items: center; color: var(--ink); font-size: 16px; font-weight: 600; text-decoration: none; white-space: nowrap; }
.burger {
  width: 23px;
  height: 22px;
  margin-right: 9px;
  background: linear-gradient(#fff 3px, transparent 3px 9px, #fff 9px 12px, transparent 12px 18px, #fff 18px 21px, transparent 21px);
}

/* Page head */
.crumbs { display: flex; padding: 9px 16px 0; font-size: 14px; line-height: 20px; }
.crumbs li + li::before { content: ""; display: inline-block; width: 2px; height: 14px; margin: 0 8px 0 9px; background: var(--green); vertical-align: -2px; }
.crumbs a { color: var(--ink); text-decoration: none; }
.crumbs__current { color: var(--green); }
.title { margin: 24px 0 28px; padding-left: 14px; color: #262626; font-size: 29px; line-height: 36px; }

/* Cards */
.card { display: grid; grid-template-columns: 537px 1fr; min-height: 177px; margin: 0 -2px 24px 2px; padding-left: 79px; background: #f0f0f0; }
.card--contacts { align-items: center; }
.contact { display: flex; align-items: center; gap: 6px; }
.contact .outline { margin-top: 4px; }
.contact__phone { color: #262626; font-size: 32px; font-weight: 600; line-height: 40px; white-space: nowrap; }
.contact--mail { gap: 12px; padding-left: 3px; }
.contact a { color: #000; font-size: 18px; font-weight: 600; text-underline-offset: 3px; text-decoration-thickness: 1px; }
.outline { fill: none; stroke: var(--green-dark); stroke-width: 3; stroke-linecap: round; stroke-linejoin: round; }
.card--address { padding-top: 44px; color: #000; }
.card h2, .company h2 { color: #000; font-size: 20px; line-height: 28px; }
.card--address p { margin-top: 6px; }
.hours--card .days { margin-top: 7px; }
.card--address .hours__time { margin-top: 4px; }

.company { display: flex; justify-content: space-between; margin: 28px 0 24px; border-radius: 12px; background: var(--green); color: #fff; overflow: hidden; }
.company__text { padding: 67px 0 0 78px; }
.company__text p { margin-top: 9px; }
.company__download { position: relative; flex: none; display: flex; flex-direction: column; align-items: center; width: 256px; min-height: 249px; padding: 44px 0 0 16px; }
.company__arc { position: absolute; top: 0; left: 0; overflow: visible; fill: var(--orange); stroke: #fff; stroke-width: 8; }
.company__printer { position: relative; }
.company__printer text { fill: var(--green); font: bold 11px "Liberation Sans", sans-serif; }
.company__download a { position: relative; margin-top: 2px; color: #fff; text-decoration-thickness: 1px; text-underline-offset: 3px; }

/* Map */
.map { position: relative; height: 511px; overflow: hidden; background: #f5f1d9; }
.map__canvas { position: absolute; inset: 0; width: 100%; height: 100%; }
.map__canvas path { vector-effect: non-scaling-stroke; }
.map__title { position: relative; padding-top: 41px; color: var(--ink); font-size: 30px; font-weight: 500; line-height: 36px; text-align: center; }
.map__title::before { content: ""; position: absolute; top: 25px; left: 50%; width: 44px; height: 6px; margin-left: -20px; border-radius: 3px; background: var(--orange); }
.map__controls { position: absolute; top: 233px; right: 20px; display: grid; gap: 8px; }
.map__controls button { display: grid; place-items: center; width: 36px; height: 36px; border-radius: 50%; background: #fff; box-shadow: 0 2px 4px rgba(0, 0, 0, .2); }
.map__controls button:first-child { margin-bottom: 8px; }
.map__controls svg { fill: none; stroke: #4a4a4a; stroke-width: 2; }

.land { fill: #f5f1d9; }
.industrial { fill: #ebebeb; }
.park { fill: #d4e6ce; }
.wood { fill: #cfe0c0; }
.water { fill: #aecbd8; }
.sand { fill: url(#sand); }
.marsh { fill: none; stroke: #b4c4f4; stroke-width: 1; }
.trail { fill: none; stroke: #c9c39c; stroke-width: 1; }
.stream { fill: none; stroke: #a5c6d8; stroke-width: 1; }
.ring { fill: #f5f1d9; stroke: #fff; stroke-width: 3; }
.casing, .road { fill: none; stroke-linejoin: round; }
.casing--minor { stroke: #d3d0c6; stroke-width: 5; }
.road--minor { stroke: #fff; stroke-width: 3; }
.casing--main { stroke: #c9c7c0; stroke-width: 8; }
.road--main { stroke: #fff; stroke-width: 6; }
.casing--yellow { stroke: #d4c68a; stroke-width: 7; }
.road--yellow { stroke: #fcf0aa; stroke-width: 5; }
.casing--orange { stroke: #d6a160; stroke-width: 10; }
.road--orange { stroke: #fdca80; stroke-width: 8; }
.casing--loop { stroke: #d6a160; stroke-width: 6; }
.road--loop { stroke: #fdca80; stroke-width: 4; }
.rail { fill: none; stroke: #999; stroke-width: 3; }
.rail--gaps { stroke: #f7f7f7; stroke-width: 2; stroke-dasharray: 12 12; }

.label { fill: #444; stroke: #fffdf2; stroke-width: 2; stroke-linejoin: round; paint-order: stroke; }
.label--small { font-size: 10px; }
.label--medium { font-size: 11px; }
.label--large { font-size: 13px; }
.label--avenue { font-size: 14px; stroke: #fde6bb; }
.label--place { font-size: 11px; fill: #5f5f7c; }
.label--park { font-size: 10px; font-style: italic; font-weight: 500; fill: #1f6140; }
.label--water { font-size: 10px; font-style: italic; fill: #5883ad; stroke: none; }
.label--district { font-size: 16px; font-weight: 700; fill: #aaa9a9; text-anchor: middle; }
.label--station { font-size: 10px; fill: #3d55a5; }

/* Footer */
.footer { padding: 33px 0 19px; border-bottom: 10px solid #3fb64c; background: #333; color: #d0d0d0; }
.footer__grid { display: grid; grid-template-columns: 321px 241px 161px 1fr; align-items: start; }
.footer .logo__text { fill: #fff; }
.footer .logo__clock { fill: var(--green); }
.hours--footer { margin: 14px 0 0 15px; }
.hours--footer .days span { background: var(--green); }
.hours--footer .hours__time { margin-top: 3px; color: #f5821f; font-size: 16px; font-weight: 400; }
.footer__address { margin-top: 38px; padding-left: 3px; font-style: normal; }
.footer__address a { color: var(--green); text-decoration-thickness: 1px; text-underline-offset: 3px; }
.footer__services { padding-top: 24px; }
.footer h2 { margin-bottom: 7px; color: #fff; font-size: 19px; line-height: 24px; }
.links { font-size: 15px; line-height: 22px; }
.links--more { margin-top: 2px; }
.links a { color: #aaa; text-decoration-thickness: 1px; text-underline-offset: 3px; }
.footer__pages { padding-top: 58px; }
.footer__phones { padding-top: 58px; color: var(--green); font-size: 25px; font-weight: 600; line-height: 28px; white-space: nowrap; }
.write { width: 215px; height: 42px; margin: 32px 0 0 1px; border-radius: 12px; background: var(--orange); box-shadow: 3px 4px 0 #1c1c1c; color: #fff; font-size: 15px; font-weight: 600; line-height: 40px; }
.footer__bottom { display: flex; justify-content: space-between; margin-top: 81px; padding: 0 104px 0 4px; color: #6b6b6b; font-size: 15px; line-height: 20px; }
.footer__bottom span + span { margin-left: 14px; color: #616161; }
.footer__bottom a { color: inherit; text-decoration: none; }

@media (max-width: 960px) {
  .header__grid, .footer__grid, .card { grid-template-columns: 1fr; row-gap: 16px; padding-left: 16px; }
  .card { margin-right: 0; }
  .nav__list { display: flex; flex-wrap: wrap; gap: 8px 24px; }
  .company { flex-direction: column; }
}
```
